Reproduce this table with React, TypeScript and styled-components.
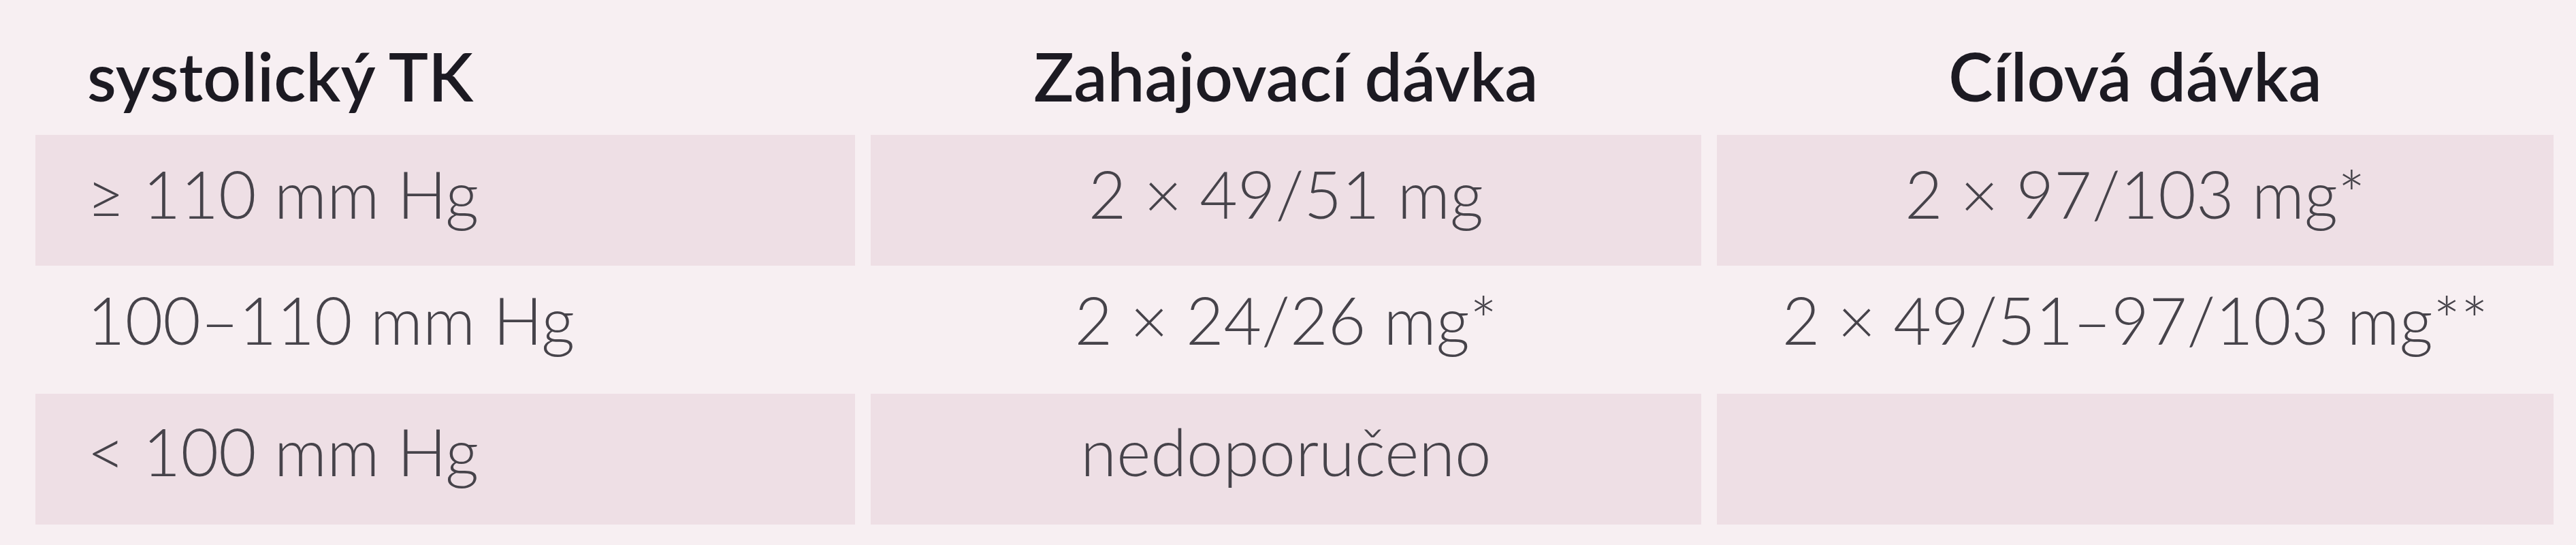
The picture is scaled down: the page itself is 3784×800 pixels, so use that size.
import React from 'react';
import styled, { createGlobalStyle } from 'styled-components';

const GlobalStyle = createGlobalStyle`
    html, body {
        margin: 0;
        padding: 0;
        background-color: #f7eff2;
    }
`

type Row = { cells: string[]; shaded: boolean; height: number; top: number };

const rows: Row[] = [
    { cells: ['≥ 110 mm Hg', '2 × 49/51 mg', '2 × 97/103 mg*'], shaded: true, height: 192, top: 28 },
    { cells: ['100–110 mm Hg', '2 × 24/26 mg*', '2 × 49/51–97/103 mg**'], shaded: false, height: 188, top: 21 },
    { cells: ['< 100 mm Hg', 'nedoporučeno', ''], shaded: true, height: 192, top: 26 },
];

function App() {
    return (
        <>
            <GlobalStyle />
            <Page>
                <Table>
                    <HeadCell $first>systolický TK</HeadCell>
                    <HeadCell>Zahajovací dávka</HeadCell>
                    <HeadCell>Cílová dávka</HeadCell>
                    {rows.map((row, r) =>
                        row.cells.map((text, c) => (
                            <Cell
                                key={r + '-' + c}
                                $first={c === 0}
                                $shaded={row.shaded}
                                $height={row.height}
                                $top={row.top}
                            >
                                {text}
                            </Cell>
                        ))
                    )}
                </Table>
            </Page>
        </>
    )
}

export default App;

const Page = styled.div`
    width: 3784px;
    height: 800px;
    background-color: #f7eff2;
    padding-left: 52px;
    box-sizing: border-box;
    overflow: hidden;
`
const Table = styled.div`
    display: grid;
    grid-template-columns: 1204px 1220px 1229px;
    column-gap: 23px;
    font-family: Lato, "Open Sans", sans-serif;
`
const HeadCell = styled.div<{ $first?: boolean }>`
    height: 198px;
    box-sizing: border-box;
    padding-top: 53px;
    padding-left: ${p => (p.$first ? '76px' : '0')};
    text-align: ${p => (p.$first ? 'left' : 'center')};
    font-size: 98px;
    line-height: 1.2;
    font-weight: 600;
    color: #1c1a22;
    white-space: nowrap;
`
const Cell = styled.div<{ $first?: boolean; $shaded: boolean; $height: number; $top: number }>`
    height: ${p => p.$height}px;
    box-sizing: border-box;
    padding-top: ${p => p.$top}px;
    padding-left: ${p => (p.$first ? '76px' : '0')};
    text-align: ${p => (p.$first ? 'left' : 'center')};
    background-color: ${p => (p.$shaded ? '#eedfe5' : 'transparent')};
    font-size: 96px;
    line-height: 1.2;
    font-weight: 300;
    color: #46434a;
    white-space: nowrap;
`
